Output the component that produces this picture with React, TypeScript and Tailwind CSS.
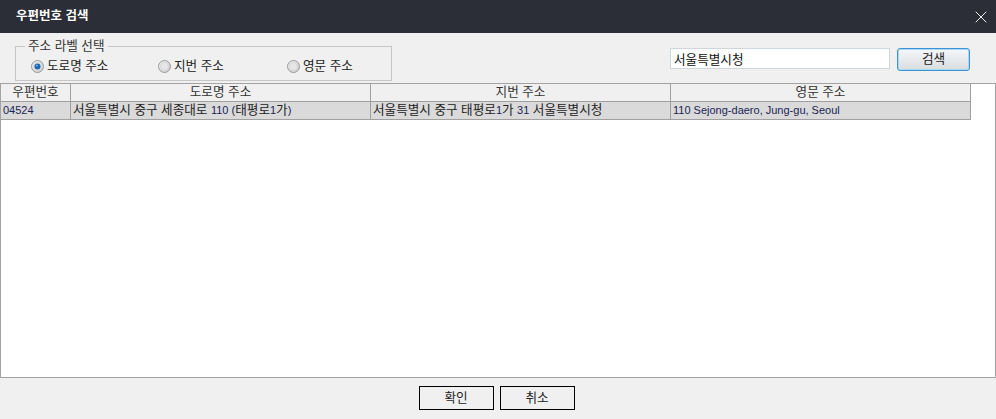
import { X } from 'lucide-react'

const font = '"Liberation Sans", "Noto Sans CJK KR", sans-serif'

const columns = [
  { label: '우편번호', width: 'w-[70px]' },
  { label: '도로명 주소', width: 'w-[300px]' },
  { label: '지번 주소', width: 'w-[300px]' },
  { label: '영문 주소', width: 'w-[300px]' },
]

const radios = [
  { label: '도로명 주소', checked: true, width: 'w-[127px]' },
  { label: '지번 주소', checked: false, width: 'w-[129px]' },
  { label: '영문 주소', checked: false, width: 'w-auto' },
]

function Radio({ checked }: { checked: boolean }) {
  const id = checked ? 'rg1' : 'rg0'
  return (
    <svg width="13" height="13" viewBox="0 0 13 13" className="shrink-0">
      <defs>
        <linearGradient id={id} x1="0" y1="0" x2="1" y2="1">
          <stop offset="0" stopColor="#f4f4f4" />
          <stop offset="1" stopColor="#c9c9c9" />
        </linearGradient>
      </defs>
      <circle cx="6.5" cy="6.5" r="6" fill={`url(#${id})`} stroke="#9a9a9a" />
      <circle cx="6.5" cy="6.5" r="4" fill="#e6e6e6" stroke="#d2d2d2" strokeWidth="0.8" />
      {checked && <circle cx="6.5" cy="6.5" r="3" fill="#1b67b0" />}
      {checked && <circle cx="5.8" cy="5.6" r="1" fill="#6fb1ea" />}
    </svg>
  )
}

const num = 'text-[11px] text-[#1a2456]'

export default function App() {
  return (
    <div
      className="w-[996px] h-[419px] bg-[#f0f0f0] flex flex-col text-[12.6px] text-[#222]"
      style={{ fontFamily: font }}
    >
      {/* Title bar */}
      <div className="h-[33px] bg-[#2b2e37] flex items-center justify-between pl-4 pr-[5px] shrink-0">
        <span className="text-white font-semibold text-[12.5px]">우편번호 검색</span>
        <X size={20} strokeWidth={1.1} className="text-white" />
      </div>

      {/* Options + search */}
      <div className="h-[50px] flex items-start justify-between shrink-0">
        <fieldset className="ml-[15px] mt-[6px] w-[377px] min-w-0 h-[42px] border border-[#c6c6c6] px-[9px] leading-[14px]">
          <legend className="px-[3px] text-[#333]">주소 라벨 선택</legend>
          <div className="flex ml-[6px] mt-[6px]">
            {radios.map((r) => (
              <label key={r.label} className={`${r.width} flex items-center gap-[3px] shrink-0`}>
                <Radio checked={r.checked} />
                <span>{r.label}</span>
              </label>
            ))}
          </div>
        </fieldset>

        <div className="flex items-start gap-[7px] mt-[15px] mr-[26px]">
          <input
            defaultValue="서울특별시청"
            className="w-[220px] h-[21px] bg-white border border-[#cfd6dc] px-[3px] text-[12.6px] text-[#111] outline-none"
          />
          <button className="w-[73px] h-[23px] rounded-[3px] border border-[#3d94d4] bg-gradient-to-b from-[#f4f8fb] to-[#dadde0] shadow-[inset_0_0_0_1px_#a9d8f5] text-[12.6px]">
            검색
          </button>
        </div>
      </div>

      {/* Result list */}
      <div className="h-[295px] border border-[#a3a3a3] bg-white shrink-0">
        <div className="flex w-[970px] h-[18px]">
          {columns.map((c) => (
            <div
              key={c.label}
              className={`${c.width} shrink-0 bg-[#f0f0f0] border-r border-b border-[#a0a0a0] flex items-center justify-center text-[#333]`}
            >
              {c.label}
            </div>
          ))}
        </div>
        <div className="flex w-[970px] h-[18px] bg-[#dadada]">
          <div className={`w-[70px] shrink-0 border-r border-b border-[#a0a0a0] flex items-center pl-[2px] ${num}`}>
            04524
          </div>
          <div className="w-[300px] shrink-0 border-r border-b border-[#a0a0a0] flex items-center pl-[2px] whitespace-pre">
            서울특별시 중구 세종대로 <span className={num}>110 (</span>태평로<span className={num}>1</span>가
            <span className={num}>)</span>
          </div>
          <div className="w-[300px] shrink-0 border-r border-b border-[#a0a0a0] flex items-center pl-[2px] whitespace-pre">
            서울특별시 중구 태평로<span className={num}>1</span>가 <span className={num}>31</span> 서울특별시청
          </div>
          <div className={`w-[300px] shrink-0 border-r border-b border-[#a0a0a0] flex items-center pl-[2px] ${num}`}>
            110 Sejong-daero, Jung-gu, Seoul
          </div>
        </div>
      </div>

      {/* Footer buttons */}
      <div className="flex-1 flex justify-center items-start pt-[8px] gap-[6px] pr-[3px]">
        <button className="w-[75px] h-[24px] border border-black bg-[#f0f0f0] text-[12.6px]">확인</button>
        <button className="w-[75px] h-[24px] border border-black bg-[#f0f0f0] text-[12.6px]">취소</button>
      </div>
    </div>
  )
}
